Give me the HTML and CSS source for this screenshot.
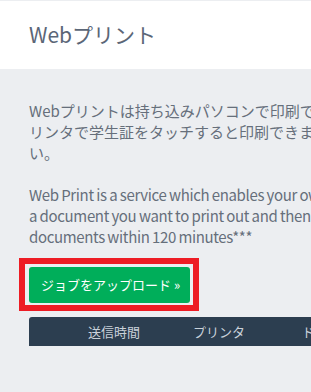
FILE: index.html
```html
<!DOCTYPE html>
<html lang="ja">
<head>
  <meta charset="UTF-8" />
  <meta name="viewport" content="width=device-width, initial-scale=1" />
  <title>Webプリント</title>
  <link rel="stylesheet" href="styles.css">
</head>
<body>
  <div class="page">
    <div class="page-header">
      <h1>Webプリント</h1>
    </div>

    <div class="content">
      <p class="intro">
        Webプリントは持ち込みパソコンで印刷できるサービスです。印刷したいファイルをアップロードし、学内のプ<br>
        リンタで学生証をタッチすると印刷できます。アップロード後120分以内に印刷してくださ<br>
        い。<br>
        <br>
        <span class="intro-en">Web Print is a service which enables your own computer to print. Please upload<br>
        a document you want to print out and then touch your student ID card to a printer to print the<br>
        documents within 120 minutes***</span>
      </p>

      <div class="highlight">
        <a class="upload-btn" href="#">ジョブをアップロード »</a>
      </div>

      <table class="jobs">
        <thead>
          <tr>
            <th class="col-check"></th>
            <th class="col-time">送信時間</th>
            <th class="col-printer">プリンタ</th>
            <th class="col-doc">ドキュメント名</th>
            <th class="col-pages">ページ数</th>
          </tr>
        </thead>
        <tbody></tbody>
      </table>
    </div>
  </div>
</body>
</html>
```

FILE: styles.css
```css
html, body {
  margin: 0;
  padding: 0;
  overflow: hidden;
}
body {
  font-family: "Noto Sans CJK JP", "Noto Sans", sans-serif;
  background: #eceef1;
  color: #666f7b;
}
.page {
  width: 760px;
}
.page-header {
  background: #fff;
  margin-top: 1px;
  padding: 18px 29px 20px;
}
.page-header h1 {
  margin: 0;
  font-size: 21px;
  line-height: 30px;
  font-weight: normal;
  color: #5b6677;
}
.content {
  padding: 31px 29px;
}
.intro {
  margin: 0;
  font-size: 15px;
  line-height: 21px;
  white-space: nowrap;
}
.intro-en {
  letter-spacing: -0.35px;
  word-spacing: -0.5px;
}
.highlight {
  display: inline-block;
  margin: 11px 0 0 -10px;
  padding: 3px 3px 2px 4px;
  border: 6px solid #ed1c24;
}
.upload-btn {
  display: block;
  height: 36px;
  line-height: 36px;
  padding: 0 10px 0 12px;
  background: #00ae5a;
  color: #fff;
  font-size: 13px;
  text-decoration: none;
  border-radius: 3px;
}
.jobs {
  margin-top: 6px;
  border-collapse: collapse;
  width: 680px;
}
.jobs th {
  background: #2c3e50;
  color: #c9d1da;
  font-size: 13px;
  font-weight: normal;
  height: 29px;
  padding: 0;
  text-align: left;
}
.jobs th.col-check {
  width: 59px;
  border-top-left-radius: 3px;
}
.jobs th.col-time {
  width: 105px;
}
.jobs th.col-printer {
  width: 109px;
}
.jobs th.col-doc {
  width: 200px;
}
```
